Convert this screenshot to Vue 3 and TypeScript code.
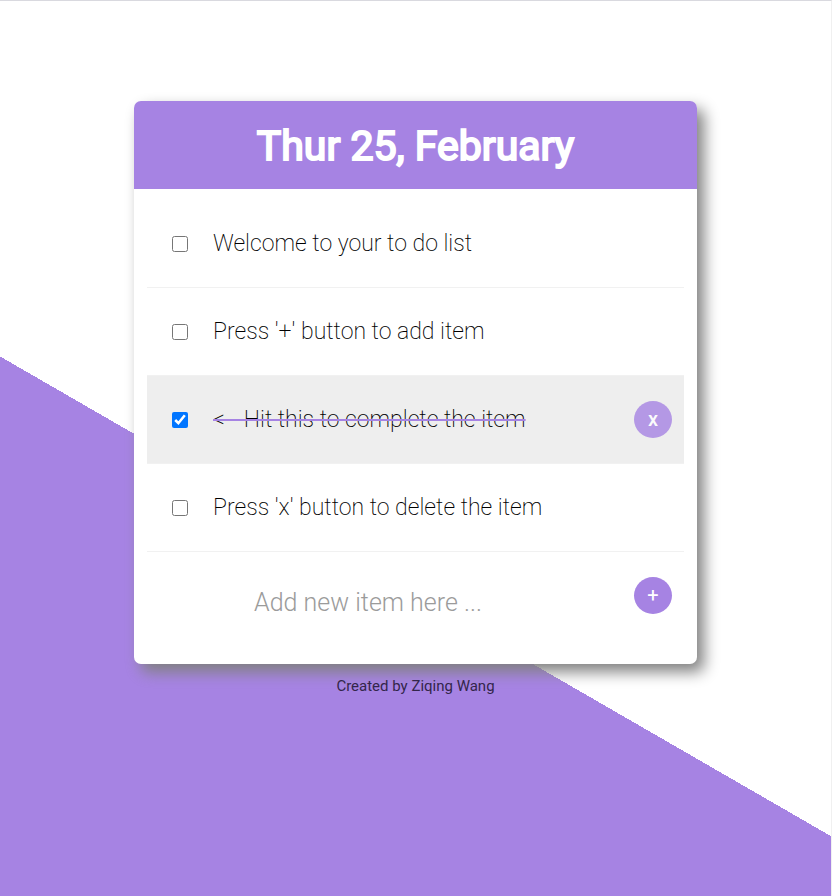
<script setup lang="ts">
import { ref } from 'vue'

interface Item {
  id: number
  text: string
  done: boolean
}

const items = ref<Item[]>([
  { id: 1, text: 'Welcome to your to do list', done: false },
  { id: 2, text: "Press '+' button to add item", done: false },
  { id: 3, text: '<-- Hit this to complete the item', done: true },
  { id: 4, text: "Press 'x' button to delete the item", done: false },
])
const draft = ref('')

function addItem() {
  const text = draft.value.trim()
  if (!text) return
  items.value.push({ id: Date.now(), text, done: false })
  draft.value = ''
}

function removeItem(id: number) {
  items.value = items.value.filter((item) => item.id !== id)
}
</script>

<template>
  <div class="page">
    <main class="card">
      <header class="heading">
        <h1>Thur 25, February</h1>
      </header>
      <div class="box">
        <ul class="list">
          <li v-for="item in items" :key="item.id" class="item" :class="{ done: item.done }">
            <input :id="`item-${item.id}`" v-model="item.done" type="checkbox" />
            <label :for="`item-${item.id}`">{{ item.text }}</label>
            <button v-if="item.done" type="button" class="round remove" @click="removeItem(item.id)">x</button>
          </li>
        </ul>
        <form class="add" @submit.prevent="addItem">
          <input v-model="draft" type="text" aria-label="New item" placeholder="Add new item here ..." autocomplete="off" />
          <button type="submit" class="round">+</button>
        </form>
      </div>
    </main>
    <footer class="footer">Created by Ziqing Wang</footer>
  </div>
</template>

<style>
body {
  margin: 0;
}
</style>

<style scoped>
.page {
  box-sizing: border-box;
  min-height: 100vh;
  padding: 100px 16px 16px;
  border-top: 1px solid #d9d9df;
  border-right: 1px solid #f0f0f0;
  background: linear-gradient(210deg, #fff calc(50% + 128px), #a683e3 0);
  font-family: Roboto, 'Liberation Sans', sans-serif;
  font-weight: 300;
}

.card {
  max-width: 563px;
  margin: 0 auto;
  border-radius: 7px;
  background: #fff;
  box-shadow: 7px 8px 15px 0 gray;
  overflow: hidden;
}

.heading {
  padding: 21px 16px 19px;
  background: #a683e3;
  color: #fff;
  text-align: center;
}

h1 {
  margin: 0;
  font-size: 41px;
  line-height: 48px;
  font-weight: 400;
  -webkit-text-stroke: 2px #fff;
}

.box {
  padding: 11px 13px 0;
}

.list {
  margin: 0;
  padding: 0;
  list-style: none;
}

.item {
  display: flex;
  align-items: center;
  box-sizing: border-box;
  min-height: 88px;
  padding: 0 12px 0 25px;
  border-bottom: 1px solid #f1f1f1;
}

.item.done {
  background: #eee;
}

.item input {
  flex: none;
  width: 16px;
  height: 16px;
  margin: 0;
}

.item label {
  margin: 0 auto 0 25px;
  color: #000;
  font-size: 23px;
  line-height: 30px;
  font-weight: 200;
}

.item.done label {
  text-decoration: line-through 2px #a683e3;
}

.round {
  flex: none;
  width: 38px;
  height: 37px;
  padding: 0;
  border: 0;
  border-radius: 50%;
  background: #a683e3;
  color: #fff;
  font: 400 20px/37px Roboto, 'Liberation Sans', sans-serif;
  text-align: center;
}

.remove {
  opacity: 0.8;
  font-weight: 500;
}

.add {
  display: flex;
  align-items: flex-start;
  padding: 25px 12px 37px;
}

.add input {
  flex: 1;
  min-width: 0;
  height: 50px;
  margin-right: 57px;
  padding: 0;
  border: 0;
  outline: 0;
  background: transparent;
  font: 300 25px/30px Roboto, 'Liberation Sans', sans-serif;
  text-align: center;
}

.add input::placeholder {
  color: #9b9b9b;
  opacity: 1;
}

.footer {
  padding-top: 12px;
  color: #33264a;
  font-size: 15px;
  line-height: 20px;
  font-weight: 400;
  text-align: center;
}
</style>
